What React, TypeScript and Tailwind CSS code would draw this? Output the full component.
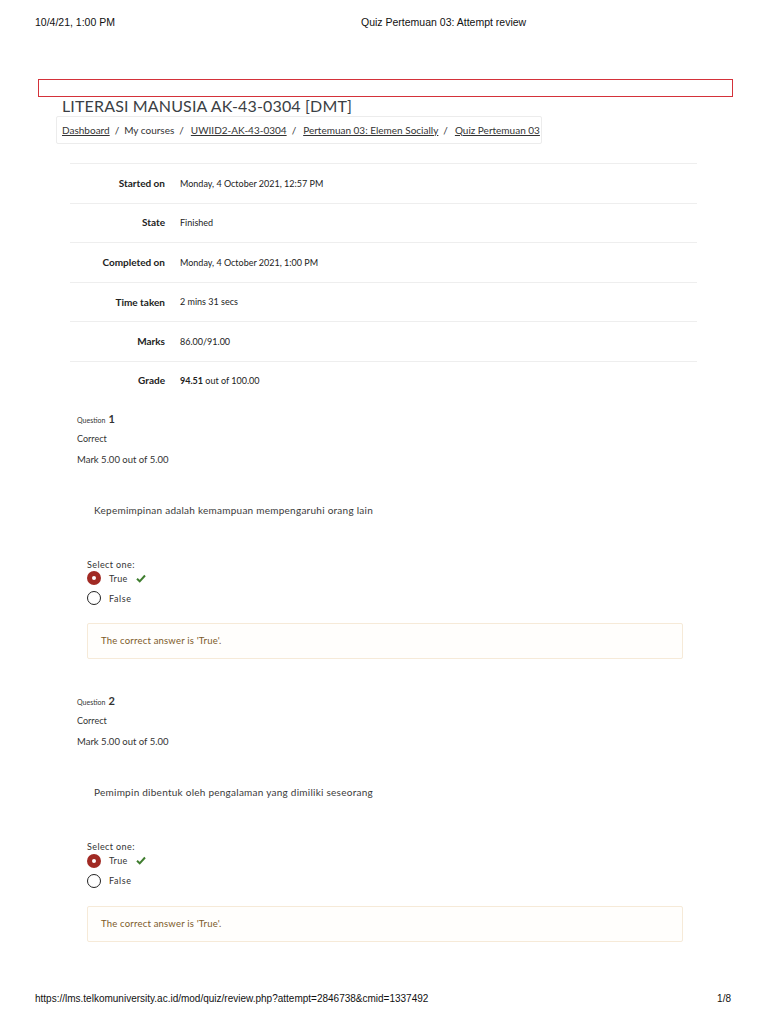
import React from "react";

const summary = [
  { label: "Started on", value: "Monday, 4 October 2021, 12:57 PM" },
  { label: "State", value: "Finished" },
  { label: "Completed on", value: "Monday, 4 October 2021, 1:00 PM" },
  { label: "Time taken", value: "2 mins 31 secs" },
  { label: "Marks", value: "86.00/91.00" },
];

const questions = [
  { no: 1, text: "Kepemimpinan adalah kemampuan mempengaruhi orang lain" },
  { no: 2, text: "Pemimpin dibentuk oleh pengalaman yang dimiliki seseorang" },
];

const Check = () => (
  <svg width="10" height="9" viewBox="0 0 10 9" className="ml-[8px]">
    <path d="M1 4.8 L3.7 7.3 L9 1.5" fill="none" stroke="#3f7d2f" strokeWidth="2" />
  </svg>
);

const QuestionBlock = ({ no, text }: { no: number; text: string }) => (
  <div className="flex flex-col">
    <div className="flex h-[18px] items-baseline pl-[17px] text-[#333]">
      <span className="text-[7px]">Question</span>
      <span className="ml-[3px] text-[11px] font-bold">{no}</span>
    </div>
    <div className="h-[20px] pl-[17px] text-[9px] leading-[20px] text-[#333]">Correct</div>
    <div className="h-[22px] pl-[17px] text-[9.5px] leading-[22px] text-[#333]">Mark 5.00 out of 5.00</div>
    <div className="mt-[32px] h-[18px] pl-[34px] text-[10px] tracking-[0.25px] text-[#3a3a3a]">{text}</div>
    <div className="mt-[37px] pl-[27px] text-[9px] tracking-[0.4px] text-[#333]">Select one:</div>
    <div className="-mt-[2px] flex h-[18px] items-center pl-[27px]">
      <span className="flex h-[14px] w-[14px] items-center justify-center rounded-full bg-[#a12a24]">
        <span className="h-[4px] w-[4px] rounded-full bg-white" />
      </span>
      <span className="ml-[8px] text-[9px] tracking-[0.3px] text-[#333]">True</span>
      <Check />
    </div>
    <div className="mt-[2px] flex h-[18px] items-center pl-[27px]">
      <span className="h-[14px] w-[14px] rounded-full border-[1.5px] border-[#222]" />
      <span className="ml-[8px] text-[9px] tracking-[0.6px] text-[#333]">False</span>
    </div>
    <div className="ml-[27px] mr-[25px] mt-[16px] flex h-[36px] items-center rounded-[2px] border border-[#f6ead8] bg-[#fffefc] pl-[13px] text-[9.5px] tracking-[0.2px] text-[#7d5a29]">
      The correct answer is 'True'.
    </div>
  </div>
);

export default function App() {
  return (
    <div className="flex h-[1024px] w-[768px] flex-col bg-white font-['Lato',sans-serif]">
      <div className="flex h-[46px] items-center pl-[35px] font-['Liberation_Sans',sans-serif] text-[10.5px] text-[#111]">
        <span className="w-[326px]">10/4/21, 1:00 PM</span>
        <span>Quiz Pertemuan 03: Attempt review</span>
      </div>

      <div className="ml-[38px] mt-[33px] h-[18px] w-[695px] border border-[#d4323a]" />

      <div className="flex flex-col px-[60px]">
        <h1 className="-mt-[1px] ml-[2px] text-[16px] leading-[20px] tracking-[0.15px] text-[#3b3f45]">
          LITERASI MANUSIA AK-43-0304 [DMT]
        </h1>
        <div className="-ml-[4px] flex h-[28px] w-[486px] items-center gap-[5px] rounded-[2px] border border-[#ececec] pl-[5px] text-[10px] text-[#333]">
          <span className="underline">Dashboard</span>
          <span>/</span>
          <span>My courses</span>
          <span>/</span>
          <span className="ml-[2px] underline">UWIID2-AK-43-0304</span>
          <span>/</span>
          <span className="ml-[2px] underline">Pertemuan 03: Elemen Socially</span>
          <span>/</span>
          <span className="ml-[2px] underline">Quiz Pertemuan 03</span>
        </div>

        <div className="ml-[10px] mr-[11px] mt-[19px] flex flex-col border-t border-[#eeeeee]">
          {summary.map((r) => (
            <div key={r.label} className="flex h-[39.6px] items-center border-b border-[#eeeeee] text-[9px] text-[#222]">
              <span className="w-[95px] text-right text-[10px] font-bold">{r.label}</span>
              <span className="ml-[15px]">{r.value}</span>
            </div>
          ))}
          <div className="flex h-[38px] items-center text-[9px] text-[#222]">
            <span className="w-[95px] text-right text-[10px] font-bold">Grade</span>
            <span className="ml-[15px]">
              <b>94.51</b> out of 100.00
            </span>
          </div>
        </div>

        <div className="mt-[11px] flex flex-col gap-[34px]">
          {questions.map((q) => (
            <QuestionBlock key={q.no} {...q} />
          ))}
        </div>
      </div>

      <div className="mt-auto mb-[18px] flex items-center justify-between pl-[35px] pr-[37px] font-['Liberation_Sans',sans-serif] text-[10px] text-[#111]">
        <span>https://lms.telkomuniversity.ac.id/mod/quiz/review.php?attempt=2846738&amp;cmid=1337492</span>
        <span>1/8</span>
      </div>
    </div>
  );
}
